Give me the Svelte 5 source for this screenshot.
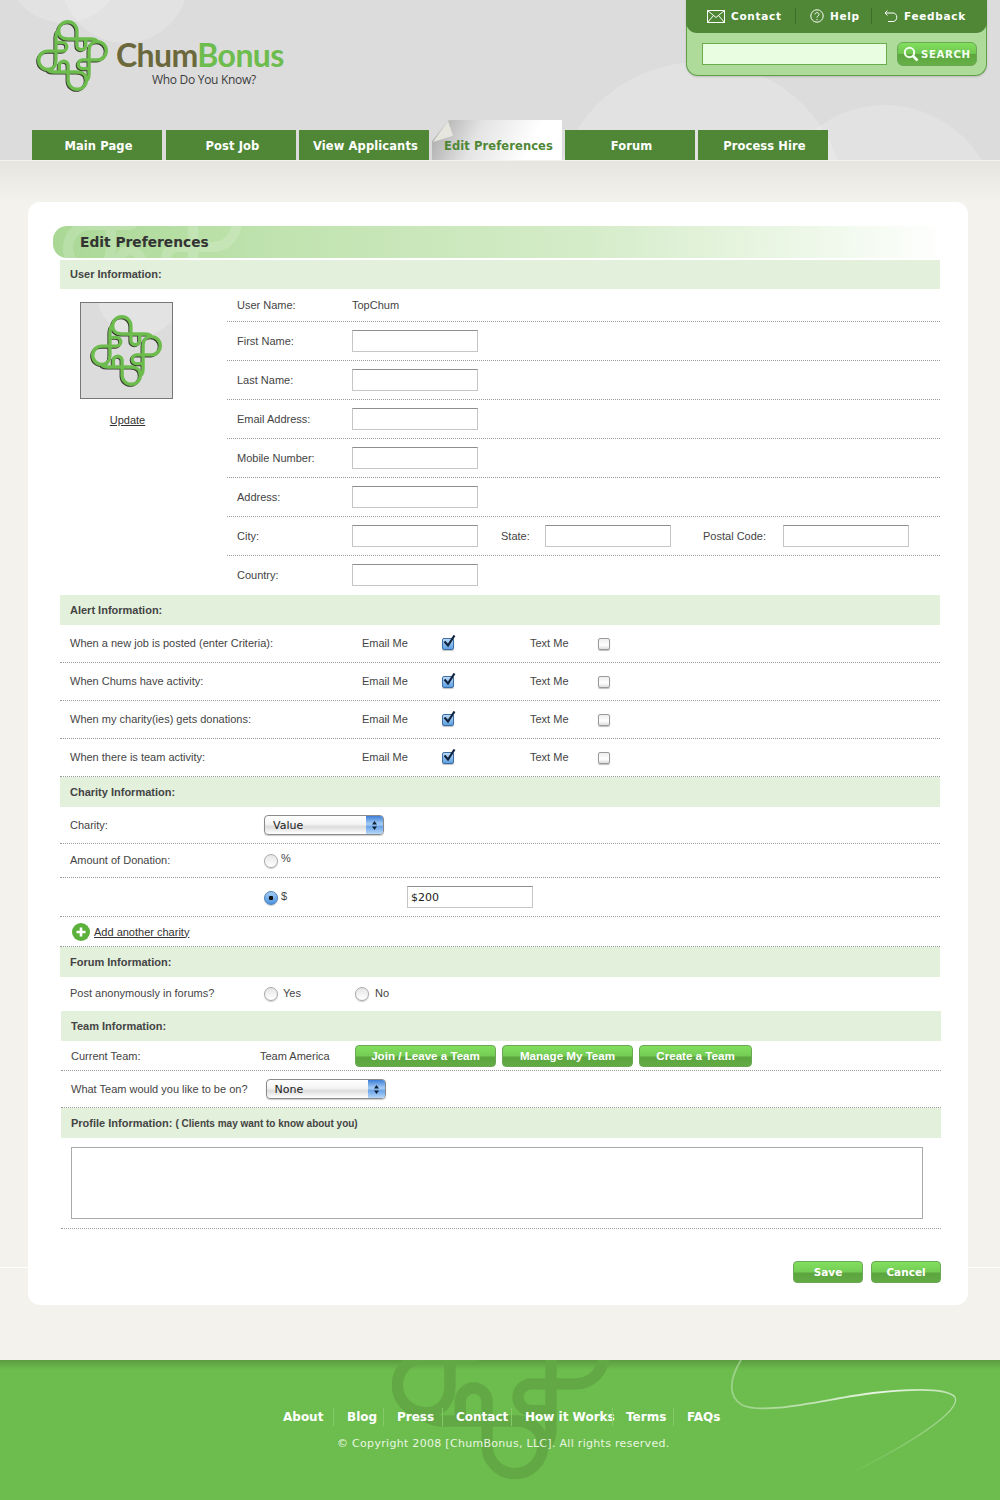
<script>
  const tabs = ['Main Page', 'Post Job', 'View Applicants', 'Edit Preferences', 'Forum', 'Process Hire']
  const contactRows = ['First Name:', 'Last Name:', 'Email Address:', 'Mobile Number:', 'Address:']
  const alerts = [
    'When a new job is posted (enter Criteria):',
    'When Chums have activity:',
    'When my charity(ies) gets donations:',
    'When there is team activity:'
  ]
  const footerLinks = ['About', 'Blog', 'Press', 'Contact', 'How it Works', 'Terms', 'FAQs']
  const knotPath =
    'M393 419C385 414 380 414 375 414H305C290 414 279 405 279 390A27 27 0 0 1 333 390V433A13 13 0 0 0 359 433V416'
</script>

{#snippet knot(color, width)}
  {#each [0, 90, 180, 270] as angle}
    <path d={knotPath} fill="none" stroke={color} stroke-width={width} transform="rotate({angle} 320 463)" />
  {/each}
{/snippet}

{#snippet logoMark()}
  <g transform="translate(-3 3)">{@render knot('#3a3d30', 9)}</g>
  {@render knot('#6dbd4e', 10)}
{/snippet}

{#snippet selectBox(value)}
  <div class="select">
    <span class="select-value">{value}</span>
    <span class="select-arrows">
      <svg width="7" height="11" viewBox="0 0 7 11"><path d="M3.5 1 6 4.5H1zM3.5 10 1 6.5h5z" fill="#123" /></svg>
    </span>
  </div>
{/snippet}

<header class="top">
  <span class="blob blob-a"></span>
  <span class="blob blob-b"></span>
  <span class="blob blob-c"></span>
  <span class="blob blob-d"></span>

  <div class="top-row">
    <div class="brand">
      <svg class="brand-mark" viewBox="212 355 216 216">{@render logoMark()}</svg>
      <div class="brand-text">
        <div class="brand-name"><span class="chum">Chum</span><span class="bonus">Bonus</span></div>
        <div class="brand-tag">Who Do You Know?</div>
      </div>
    </div>

    <div class="utility">
      <nav class="utility-nav">
        <a class="util-link util-contact">
          <svg width="18" height="13" viewBox="0 0 18 13" fill="none" stroke="#fff">
            <path d="M.5.5h17v12H.5zM.5.5 9 7.5 17.5.5M.5 12.5 6.5 5.5M17.5 12.5 11.5 5.5" />
          </svg>
          Contact
        </a>
        <a class="util-link util-help">
          <svg width="14" height="14" viewBox="0 0 14 14" fill="none" stroke="#fff">
            <circle cx="7" cy="7" r="6.2" />
            <path d="M5 5.4C5 3 9 3 9 5.4 9 7 7 6.8 7 8.6M7 10v1.2" />
          </svg>
          Help
        </a>
        <a class="util-link util-feedback">
          <svg width="14" height="13" viewBox="0 0 14 13" fill="none" stroke="#fff">
            <path d="M1 3h8c5 0 5 8.500 0 8.500H4M3.500.5 1 3l2.500 2.500" />
          </svg>
          Feedback
        </a>
      </nav>
      <div class="search">
        <div class="search-input"></div>
        <button class="search-btn">
          <svg width="16" height="16" viewBox="0 0 16 16" fill="none" stroke="#f2fff0">
            <circle cx="6.500" cy="6.500" r="4.700" stroke-width="2" />
            <path d="m10 10 4.500 4.500" stroke-width="2.600" />
          </svg>
          SEARCH
        </button>
      </div>
    </div>
  </div>

  <nav class="tabs">
    {#each tabs as tab, i}
      <a class="tab" class:active={i === 3} class:nudge={i === 1}>{tab}</a>
    {/each}
  </nav>
</header>

<main class="page">
  <div class="card">
    <h1 class="title">
      <svg class="title-mark" viewBox="207 350 226 226">{@render knot('#ffffff', 12)}</svg>
      <span>Edit Preferences</span>
    </h1>

    <section class="sect">
      <h2 class="sect-head user-head">User Information:</h2>
      <div class="user">
        <div class="user-side">
          <div class="avatar">
            <span class="avatar-blob"></span>
            <svg class="avatar-mark" viewBox="212 355 216 216">{@render logoMark()}</svg>
          </div>
          <a class="link update">Update</a>
        </div>
        <div class="user-fields">
          <div class="field name-row">
            <span class="field-label">User Name:</span>
            <span>TopChum</span>
          </div>
          {#each contactRows as label}
            <div class="field">
              <span class="field-label">{label}</span>
              <div class="input"></div>
            </div>
          {/each}
          <div class="field">
            <span class="field-label">City:</span>
            <div class="input"></div>
            <span class="state-label">State:</span>
            <div class="input"></div>
            <span class="postal-label">Postal Code:</span>
            <div class="input"></div>
          </div>
          <div class="field last">
            <span class="field-label">Country:</span>
            <div class="input"></div>
          </div>
        </div>
      </div>
    </section>

    <section class="sect">
      <h2 class="sect-head">Alert Information:</h2>
      {#each alerts as alert}
        <div class="alert">
          <span>{alert}</span>
          <span>Email Me</span>
          <span class="check on">
            <svg width="14" height="14" viewBox="0 0 14 14">
              <path d="M2.500 6.500 6 10.500 12.500.5" fill="none" stroke="#10243f" stroke-width="2.200" />
            </svg>
          </span>
          <span>Text Me</span>
          <span class="check"></span>
        </div>
      {/each}
    </section>

    <section class="sect">
      <h2 class="sect-head">Charity Information:</h2>
      <div class="charity charity-select">
        <span>Charity:</span>
        {@render selectBox('Value')}
      </div>
      <div class="charity charity-pct">
        <span>Amount of Donation:</span>
        <span class="radio"></span>
        <span class="radio-text">%</span>
      </div>
      <div class="charity charity-usd">
        <span></span>
        <span class="radio on"></span>
        <span class="radio-text">$</span>
        <div class="input amount">$200</div>
      </div>
      <div class="add-row">
        <svg width="18" height="18" viewBox="0 0 18 18">
          <circle cx="9" cy="9" r="9" fill="#5cb13c" />
          <path d="M9 4.500v9M4.500 9h9" stroke="#fff" stroke-width="2.600" />
        </svg>
        <a class="link">Add another charity</a>
      </div>
    </section>

    <section class="sect">
      <h2 class="sect-head">Forum Information:</h2>
      <div class="forum">
        <span>Post anonymously in forums?</span>
        <span class="radio"></span>
        <span>Yes</span>
        <span class="radio"></span>
        <span>No</span>
      </div>
    </section>

    <section class="sect shifted">
      <h2 class="sect-head">Team Information:</h2>
      <div class="team-row">
        <span class="team-label">Current Team:</span>
        <span class="team-name">Team America</span>
        <div class="team-btns">
          <button class="btn join">Join / Leave a Team</button>
          <button class="btn manage">Manage My Team</button>
          <button class="btn create">Create a Team</button>
        </div>
      </div>
      <div class="team-choice">
        <span>What Team would you like to be on?</span>
        {@render selectBox('None')}
      </div>
      <h2 class="sect-head profile-head">Profile Information: <small>( Clients may want to know about you)</small></h2>
      <div class="profile"><div class="profile-box"></div></div>
    </section>

    <div class="actions">
      <button class="btn action">Save</button>
      <button class="btn action">Cancel</button>
    </div>
  </div>
</main>

<footer class="foot">
  <svg class="foot-mark" viewBox="207 350 226 226">{@render knot('#62a845', 11)}</svg>
  <svg class="swoosh" width="240" height="125" viewBox="725 1360 240 125" fill="none">
    <defs>
      <linearGradient id="swoosh-arc" x1="725" y1="0" x2="960" y2="0" gradientUnits="userSpaceOnUse">
        <stop offset="0" stop-color="#fff" stop-opacity=".3" />
        <stop offset=".2" stop-color="#fff" stop-opacity=".45" />
        <stop offset=".68" stop-color="#fff" stop-opacity=".85" />
        <stop offset="1" stop-color="#fff" stop-opacity=".5" />
      </linearGradient>
      <linearGradient id="swoosh-tail" x1="0" y1="1398" x2="0" y2="1474" gradientUnits="userSpaceOnUse">
        <stop offset="0" stop-color="#fff" stop-opacity=".5" />
        <stop offset="1" stop-color="#fff" stop-opacity="0" />
      </linearGradient>
    </defs>
    <path
      d="M741 1360C730 1378 727 1396 742 1405 765 1416 830 1398 873 1393 900 1390 945 1386 955 1397"
      stroke="url(#swoosh-arc)"
      stroke-width="1.800"
    />
    <path d="M955 1397C962 1412 905 1446 850 1474" stroke="url(#swoosh-tail)" stroke-width="1.300" />
  </svg>
  <nav class="foot-links">
    {#each footerLinks as link}
      <a>{link}</a>
    {/each}
  </nav>
  <p class="copyright">© Copyright 2008 [ChumBonus, LLC]. All rights reserved.</p>
</footer>

<style>
  :global(body) {
    margin: 0;
    background: #f3f2ed;
    font-family: 'Liberation Sans', Arial, sans-serif;
    font-size: 11px;
    color: #444;
  }

  /* header */
  .top {
    position: relative;
    height: 160px;
    overflow: hidden;
    background: #dcdcdc;
    display: flex;
    flex-direction: column;
  }

  .blob {
    position: absolute;
    border-radius: 50%;
    background: rgba(255, 255, 255, 0.18);
  }
  .blob-a { left: 6px; top: -93px; width: 116px; height: 116px; }
  .blob-b { left: 61px; top: -87px; width: 128px; height: 130px; }
  .blob-c { left: 554px; top: 62px; width: 292px; height: 292px; }
  .blob-d { left: 773px; top: 105px; width: 224px; height: 224px; }

  .top-row {
    position: relative;
    height: 120px;
    display: flex;
    justify-content: space-between;
    align-items: flex-start;
    padding: 0 13px 0 36px;
  }

  .brand {
    display: flex;
    padding-top: 19px;
  }
  .brand-mark {
    width: 73px;
    height: 73px;
  }
  .brand-text {
    margin-left: 7px;
    padding-top: 18px;
  }
  .brand-name {
    font-family: Lato, sans-serif;
    font-size: 32px;
    line-height: 36px;
    letter-spacing: -0.6px;
    font-weight: 700;
  }
  .chum { color: #6b683b; }
  .bonus { color: #6dbd4e; }
  .brand-tag {
    font-family: 'Open Sans', sans-serif;
    font-size: 12px;
    line-height: 16px;
    letter-spacing: -0.3px;
    color: #3c3c3c;
    padding-left: 36px;
    margin-top: -1px;
  }

  .utility {
    width: 301px;
    height: 76px;
    box-sizing: border-box;
    background: #aedb9a;
    border: 1px solid #619f47;
    border-top: none;
    border-radius: 0 0 12px 12px;
    box-shadow: 0 1px 2px rgba(0, 0, 0, 0.15);
  }
  .utility-nav {
    height: 32px;
    padding-bottom: 1px;
    margin: 0 -1px;
    display: flex;
    align-items: center;
    background: #4f8736;
    border-radius: 0 0 11px 11px;
  }
  .util-link {
    display: flex;
    align-items: center;
    height: 16px;
    font-family: 'DejaVu Sans', sans-serif;
    font-weight: 700;
    font-size: 10.500px;
    letter-spacing: 0.7px;
    color: #fff;
  }
  .util-contact { margin-left: 21px; gap: 6px; width: 88px; }
  .util-help { padding-left: 14px; gap: 6px; width: 61px; border-left: 1px solid #3d6d29; }
  .util-feedback { padding-left: 12px; gap: 6px; border-left: 1px solid #3d6d29; }

  .search {
    display: flex;
    align-items: center;
    padding: 9px 0 0 15px;
  }
  .search-input {
    width: 185px;
    height: 22px;
    box-sizing: border-box;
    background: #e9fde0;
    border: 1px solid #69ad4c;
  }
  .search-btn {
    margin-left: 10px;
    width: 80px;
    height: 24px;
    padding: 0 0 0 5px;
    display: flex;
    align-items: center;
    gap: 2px;
    border: 1px solid #6aa856;
    border-radius: 6px;
    background: linear-gradient(#82df5e, #6fc64f 50%, #5da63f 52%, #66b047);
    font-family: 'DejaVu Sans', sans-serif;
    font-weight: 700;
    font-size: 10.200px;
    letter-spacing: 0.6px;
    color: #f2fff0;
  }

  .tabs {
    position: relative;
    height: 40px;
    padding-left: 32px;
    display: flex;
    align-items: flex-end;
    gap: 3px;
  }
  .tab {
    position: relative;
    width: 130px;
    height: 30px;
    box-sizing: border-box;
    padding: 1px 0 0 3px;
    display: flex;
    align-items: center;
    justify-content: center;
    background: #4f8736;
    font-family: 'DejaVu Sans', sans-serif;
    font-weight: 700;
    font-size: 11.500px;
    letter-spacing: 0.1px;
    color: #fff;
  }
  .tab.nudge { margin-left: 1px; }
  .tab.active {
    height: 40px;
    padding: 11px 0 0 12px;
    justify-content: flex-start;
    color: #4f8736;
    background: linear-gradient(115deg, #b4b4b4 8%, #e4e4e4 35%, #fff 75%);
    clip-path: polygon(0 21px, 17px 0, 100% 0, 100% 100%, 0 100%);
  }
  .tab.active::before {
    content: '';
    position: absolute;
    left: 1px;
    top: 1px;
    width: 20px;
    height: 21px;
    background: #e6e6de;
    clip-path: polygon(0 100%, 75% 0, 100% 70%);
  }

  /* page */
  .page {
    border-top: 1px solid #f4f4f2;
    padding: 41px 0 55px 28px;
    background:
      linear-gradient(#fff, #fff) 0 1106px / 100% 1px no-repeat,
      linear-gradient(#e6e5e0, #f3f2ed 42px) 0 0 / 100% 100% no-repeat;
  }
  .card {
    width: 940px;
    height: 1103px;
    box-sizing: border-box;
    padding-top: 24px;
    background: #fff;
    border-radius: 12px;
  }

  .title {
    position: relative;
    overflow: hidden;
    margin: 0 20px 2px 25px;
    height: 32px;
    display: flex;
    align-items: center;
    padding-left: 27px;
    border-radius: 14px 0 0 14px;
    background: linear-gradient(90deg, #aad896, #c0e3af 25%, #d5ecc9 60%, #eef8e9 85%, #fff);
    font-family: 'DejaVu Sans', sans-serif;
    font-size: 13.800px;
    font-weight: 700;
    color: #333;
  }
  .title span { position: relative; }
  .title-mark {
    position: absolute;
    left: 4px;
    top: -85px;
    width: 190px;
    height: 190px;
    opacity: 0.16;
  }

  .sect {
    margin-left: 32px;
    width: 880px;
  }
  .sect.shifted {
    margin-left: 33px;
  }
  .sect-head {
    margin: 0;
    height: 30px;
    display: flex;
    align-items: center;
    padding-left: 10px;
    background: #e3f0dc;
    font-size: 11px;
    font-weight: 700;
    color: #444;
  }
  .sect-head.user-head {
    height: 28px;
    padding-bottom: 1px;
  }

  /* user info */
  .user {
    display: flex;
  }
  .user-side {
    width: 167px;
    padding-top: 13px;
    box-sizing: border-box;
  }
  .avatar {
    position: relative;
    overflow: hidden;
    margin-left: 20px;
    width: 93px;
    height: 97px;
    box-sizing: border-box;
    border: 1px solid #777;
    background: #dcdcdc;
    display: flex;
    align-items: center;
    justify-content: center;
  }
  .avatar-blob {
    position: absolute;
    left: 16px;
    top: -52px;
    width: 85px;
    height: 85px;
    border-radius: 50%;
    background: #e3e3e3;
  }
  .avatar-mark {
    position: relative;
    width: 73px;
    height: 73px;
  }
  .link {
    color: #333;
    text-decoration: underline;
  }
  .update {
    display: block;
    margin: 15px 0 0 21px;
    width: 93px;
    text-align: center;
  }
  .user-fields {
    flex: 1;
  }
  .field {
    height: 38px;
    border-bottom: 1px dotted #999;
    display: flex;
    align-items: center;
    padding-left: 10px;
  }
  .field.name-row {
    height: 32px;
  }
  .field.last {
    border-bottom: none;
    height: 37px;
    padding-bottom: 2px;
  }
  .field-label {
    width: 115px;
  }
  .input {
    width: 126px;
    height: 22px;
    box-sizing: border-box;
    border: 1px solid #c6c6c6;
    border-top-color: #8e8e8e;
    background: #fff;
  }
  .state-label {
    margin-left: 23px;
    width: 44px;
  }
  .postal-label {
    margin-left: 32px;
    width: 80px;
  }

  /* alerts */
  .alert {
    height: 35px;
    padding: 0 0 2px 10px;
    border-bottom: 1px dotted #999;
    display: grid;
    grid-template-columns: 292px 80px 88px 68px 1fr;
    align-items: center;
  }
  .check {
    width: 12px;
    height: 12px;
    margin-top: 3px;
    box-sizing: border-box;
    position: relative;
    border: 1px solid #999;
    border-radius: 2px;
    background: linear-gradient(#eee, #fff 60%, #ddd);
    box-shadow: 0 1px 1px rgba(0, 0, 0, 0.25);
  }
  .check.on {
    border-color: #3b6ea5;
    background: linear-gradient(#bcd8f5, #5e9fe0);
  }
  .check svg {
    position: absolute;
    left: -1px;
    top: -4px;
  }

  /* charity */
  .charity {
    display: flex;
    align-items: center;
    border-bottom: 1px dotted #999;
    padding-left: 10px;
  }
  .charity > span:first-child {
    width: 194px;
  }
  .charity-select { height: 36px; }
  .charity-pct { height: 31px; padding-bottom: 2px; }
  .charity-usd { height: 38px; }
  .radio-text {
    margin: -4px 0 0 3px;
    width: 126px;
  }
  .charity-usd .radio-text {
    margin-top: -2px;
  }
  .amount {
    padding-left: 3px;
    line-height: 21px;
    font-family: 'DejaVu Sans', sans-serif;
    font-size: 11px;
    color: #222;
  }
  .radio {
    flex: none;
    width: 14px;
    height: 14px;
    box-sizing: border-box;
    margin-top: 2px;
    border: 1px solid #a8a8a8;
    border-radius: 50%;
    background: linear-gradient(#e6e6e6, #fff);
    box-shadow: 0 1px 1px rgba(0, 0, 0, 0.2);
  }
  .radio.on {
    border-color: #4a7fb8;
    background: radial-gradient(circle, #111 0 2px, transparent 2.500px), linear-gradient(#a5ccf3, #4d94e2);
  }
  .select {
    flex: none;
    width: 120px;
    height: 20px;
    box-sizing: border-box;
    display: flex;
    border: 1px solid #8a8a8a;
    border-radius: 4px;
    overflow: hidden;
    background: linear-gradient(#fff, #f4f4f4 45%, #dcdcdc 60%, #fff);
    box-shadow: 0 1px 1px rgba(0, 0, 0, 0.2);
  }
  .select-value {
    flex: 1;
    padding-left: 8px;
    line-height: 20px;
    font-family: 'DejaVu Sans', sans-serif;
    font-size: 11px;
    color: #222;
  }
  .select-arrows {
    width: 17px;
    display: flex;
    align-items: center;
    justify-content: center;
    background: linear-gradient(#3f7fd8, #a8cdf5 45%, #6aa5ea 60%, #b9d8f8);
  }
  .add-row {
    height: 29px;
    display: flex;
    align-items: center;
    gap: 4px;
    padding-left: 12px;
    border-bottom: 1px dotted #999;
  }

  /* forum */
  .forum {
    height: 31px;
    padding: 0 0 2px 10px;
    display: grid;
    grid-template-columns: 194px 19px 72px 20px auto;
    align-items: center;
    border-bottom: 1px dotted #fff;
  }

  /* team */
  .team-row {
    height: 29px;
    display: flex;
    align-items: center;
    padding-left: 10px;
    border-bottom: 1px dotted #999;
  }
  .team-label { width: 189px; }
  .team-name { width: 95px; }
  .team-btns {
    display: flex;
    gap: 6px;
  }
  .btn {
    height: 22px;
    padding: 0;
    border: 1px solid #6aa856;
    border-radius: 4px;
    background: linear-gradient(#82df5e, #74cc54 50%, #5da63f 55%, #62ab44);
    font-family: 'Liberation Sans', Arial, sans-serif;
    font-size: 11.600px;
    font-weight: 700;
    color: #fff;
  }
  .join { width: 141px; }
  .manage { width: 131px; }
  .create { width: 113px; }
  .team-choice {
    height: 36px;
    display: flex;
    align-items: center;
    gap: 18px;
    padding-left: 10px;
    border-bottom: 1px dotted #999;
  }
  .profile-head small {
    font-size: 10px;
    margin: 1px 0 0 3px;
  }
  .profile {
    height: 91px;
    padding: 9px 0 0 10px;
    box-sizing: border-box;
    border-bottom: 1px dotted #999;
  }
  .profile-box {
    width: 852px;
    height: 72px;
    box-sizing: border-box;
    border: 1px solid #aaa;
    background: #fff;
  }

  .actions {
    margin: 32px 27px 0 0;
    display: flex;
    justify-content: flex-end;
    gap: 8px;
  }
  .btn.action {
    width: 70px;
    font-family: 'DejaVu Sans', sans-serif;
    font-size: 10.500px;
  }

  /* footer */
  .foot {
    position: relative;
    overflow: hidden;
    height: 140px;
    background: linear-gradient(#5b9c40, #6dbd4e 10px);
    color: #fff;
  }
  .foot-mark {
    position: absolute;
    left: 384px;
    top: -106px;
    width: 233px;
    height: 233px;
  }
  .swoosh {
    position: absolute;
    left: 725px;
    top: 0;
  }
  .foot-links {
    position: relative;
    margin-left: 270px;
    padding-top: 48px;
    display: grid;
    grid-template-columns: 63px 50px 59px 69px 101px 61px auto;
    justify-content: start;
    font-family: 'DejaVu Sans', sans-serif;
    font-size: 12px;
    font-weight: 700;
    line-height: 18px;
  }
  .foot-links a {
    padding-left: 13px;
    white-space: nowrap;
    border-left: 1px solid #84ca69;
  }
  .foot-links a:first-child {
    border-left: none;
  }
  .copyright {
    position: relative;
    margin: 10px 0 0 337px;
    font-family: 'DejaVu Sans', sans-serif;
    font-size: 11px;
    line-height: 16px;
    letter-spacing: 0.3px;
    color: #e8f6e0;
  }
</style>
